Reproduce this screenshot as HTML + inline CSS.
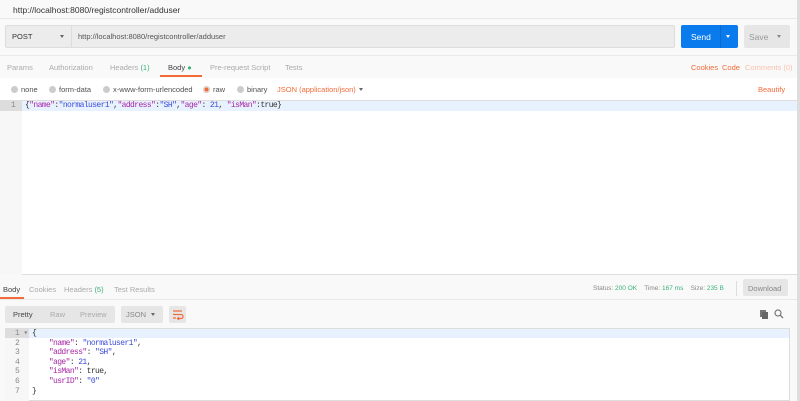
<!DOCTYPE html><html><head><style>
*{margin:0;padding:0;box-sizing:border-box}
body{width:800px;height:401px;background:#f9f9f9;font-family:"Liberation Sans",sans-serif;font-size:7.5px;color:#505050;position:relative;overflow:hidden}
.a{position:absolute;white-space:nowrap}
.g{color:#aaa}
.o{color:#f26b3a}
.mono{font-family:"Liberation Mono",monospace;font-size:8px;letter-spacing:-0.6px}
.k{color:#a626a4}.s{color:#3b4bd8}
.dot{display:inline-block;width:7px;height:7px;border-radius:50%;background:#ccc;vertical-align:-1px;margin-right:3px}
.tri{position:absolute;width:0;height:0;border-left:2.5px solid transparent;border-right:2.5px solid transparent;border-top:3px solid #666}
</style></head><body>
<div class="a" style="left:13px;top:5px;font-size:8.5px;color:#333">http://localhost:8080/registcontroller/adduser</div>
<div class="a" style="left:0;top:18px;width:797px;border-top:1px solid #e8e8e8"></div>
<div class="a" style="left:5px;top:25px;width:670px;height:23px;background:#ececec;border:1px solid #ddd;border-radius:2px"></div>
<div class="a" style="left:71px;top:25px;width:1px;height:23px;background:#ddd"></div>
<div class="a" style="left:12px;top:32px;color:#333">POST</div>
<div class="tri" style="left:60px;top:35px"></div>
<div class="a" style="left:78px;top:32px;color:#555">http://localhost:8080/registcontroller/adduser</div>
<div class="a" style="left:681px;top:25px;width:57px;height:23px;background:#097bed;border-radius:2px"></div>
<div class="a" style="left:720px;top:25px;width:1px;height:23px;background:#0a6ad0"></div>
<div class="a" style="left:691px;top:32px;color:#fff;font-size:8.5px">Send</div>
<div class="tri" style="left:726px;top:35px;border-top-color:#fff"></div>
<div class="a" style="left:744px;top:25px;width:46px;height:23px;background:#e6e6e6;border-radius:2px"></div>
<div class="a" style="left:749px;top:32px;color:#999;font-size:8.5px">Save</div>
<div class="tri" style="left:777px;top:35px;border-top-color:#888"></div>
<div class="a" style="left:0;top:55px;width:797px;border-top:1px solid #eaeaea"></div>
<div class="a g" style="left:7px;top:63px">Params</div>
<div class="a g" style="left:49px;top:63px">Authorization</div>
<div class="a g" style="left:110px;top:63px">Headers <span style="color:#3ab37a">(1)</span></div>
<div class="a" style="left:168px;top:63px;color:#444">Body <span style="color:#3ab37a">●</span></div>
<div class="a" style="left:160px;top:75px;width:42px;height:2px;background:#f26b3a"></div>
<div class="a g" style="left:210px;top:63px">Pre-request Script</div>
<div class="a g" style="left:285px;top:63px">Tests</div>
<div class="a o" style="left:691px;top:63px">Cookies</div>
<div class="a o" style="left:722px;top:63px">Code</div>
<div class="a" style="left:745px;top:63px;color:#f7c2ad">Comments (0)</div>
<div class="a" style="left:0;top:78px;width:797px;height:22px;background:#fff"></div>
<div class="a" style="left:11px;top:85px"><span class="dot"></span>none</div>
<div class="a" style="left:49px;top:85px"><span class="dot"></span>form-data</div>
<div class="a" style="left:103px;top:85px"><span class="dot"></span>x-www-form-urlencoded</div>
<div class="a" style="left:203px;top:85px"><span class="dot" style="background:#f26b3a;box-shadow:inset 0 0 0 1.5px #ddd"></span>raw</div>
<div class="a" style="left:237px;top:85px"><span class="dot"></span>binary</div>
<div class="a o" style="left:277px;top:85px">JSON (application/json)</div>
<div class="tri" style="left:359px;top:88px"></div>
<div class="a o" style="left:758px;top:85px">Beautify</div>
<div class="a" style="left:0;top:100px;width:797px;height:175px;background:#fff;border-top:1px solid #ddd;border-bottom:1px solid #ddd"></div>
<div class="a" style="left:0;top:101px;width:22px;height:174px;background:#f7f7f7"></div>
<div class="a" style="left:0;top:101px;width:22px;height:10px;background:#ddd"></div>
<div class="a" style="left:22px;top:101px;width:775px;height:10px;background:#e8f2fe"></div>
<div class="a mono" style="left:11px;top:101px;color:#888">1</div>
<div class="a mono" style="left:25px;top:101px;color:#333">{<span class="k">"name"</span>:<span class="s">"normaluser1"</span>,<span class="k">"address"</span>:<span class="s">"SH"</span>,<span class="k">"age"</span>: <span class="s">21</span>, <span class="k">"isMan"</span>:true}</div>
<div class="a" style="left:797px;top:0;width:3px;height:401px;background:#ddd"></div>
<div class="a g" style="left:3px;top:285px;color:#444">Body</div>
<div class="a g" style="left:29px;top:285px">Cookies</div>
<div class="a g" style="left:64px;top:285px">Headers <span style="color:#3ab37a">(5)</span></div>
<div class="a g" style="left:114px;top:285px">Test Results</div>
<div class="a" style="left:0;top:297px;width:24px;height:2px;background:#f26b3a"></div>
<div class="a" style="left:0;top:299px;width:797px;border-top:1px solid #e8e8e8"></div>
<div class="a" style="left:593px;top:285px;font-size:6.5px;color:#888">Status: <span style="color:#3ab37a">200 OK</span> &nbsp;&nbsp; Time: <span style="color:#3ab37a">167 ms</span> &nbsp;&nbsp; Size: <span style="color:#3ab37a">235 B</span></div>
<div class="a" style="left:736px;top:281px;width:1px;height:15px;background:#ddd"></div>
<div class="a" style="left:743px;top:279px;width:45px;height:17px;background:#e6e6e6;border-radius:2px"></div>
<div class="a" style="left:748px;top:284px;color:#888">Download</div>
<div class="a" style="left:5px;top:306px;width:110px;height:17px;background:#e6e6e6;border-radius:2px"></div>
<div class="a" style="left:13px;top:310px;color:#444">Pretty</div>
<div class="a g" style="left:50px;top:310px">Raw</div>
<div class="a g" style="left:80px;top:310px">Preview</div>
<div class="a" style="left:121px;top:306px;width:42px;height:17px;background:#e6e6e6;border-radius:2px"></div>
<div class="a" style="left:126px;top:310px;color:#888">JSON</div>
<div class="tri" style="left:151px;top:313px"></div>
<div class="a" style="left:169px;top:306px;width:17px;height:17px;background:#e6e6e6;border-radius:2px"></div>
<svg class="a" style="left:171px;top:308px" width="13" height="13" viewBox="0 0 13 13"><path d="M2 3h9M2 6.5h8a2 2 0 0 1 0 4H7M2 10h3M8 9l-1.5 1.5L8 12" stroke="#f26b3a" fill="none" stroke-width="1.2"/></svg>
<div class="a" style="left:760px;top:310px;width:6px;height:7px;background:#777"></div>
<div class="a" style="left:762px;top:312px;width:6px;height:7px;background:#666"></div>
<svg class="a" style="left:774px;top:309px" width="10" height="10"><circle cx="4" cy="4" r="3" stroke="#777" fill="none" stroke-width="1.2"/><path d="M6.2 6.2L9 9" stroke="#777" stroke-width="1.3"/></svg>
<div class="a" style="left:5px;top:328px;width:785px;height:73px;background:#fff;border:1px solid #ddd"></div>
<div class="a" style="left:5px;top:329px;width:24px;height:72px;background:#f7f7f7"></div>
<div class="a" style="left:5px;top:329px;width:24px;height:9px;background:#ddd"></div>
<div class="a" style="left:29px;top:329px;width:760px;height:9px;background:#e8f2fe"></div>
<div class="a mono" style="left:15px;top:329px;color:#888;line-height:9.6px">1 ▾<br>2<br>3<br>4<br>5<br>6<br>7</div>
<div class="a mono" style="left:32px;top:329px;color:#333;line-height:9.6px;white-space:pre">{
    <span class="k">"name"</span>: <span class="s">"normaluser1"</span>,
    <span class="k">"address"</span>: <span class="s">"SH"</span>,
    <span class="k">"age"</span>: <span class="s">21</span>,
    <span class="k">"isMan"</span>: true,
    <span class="k">"usrID"</span>: <span class="s">"0"</span>
}</div>
</body></html>
